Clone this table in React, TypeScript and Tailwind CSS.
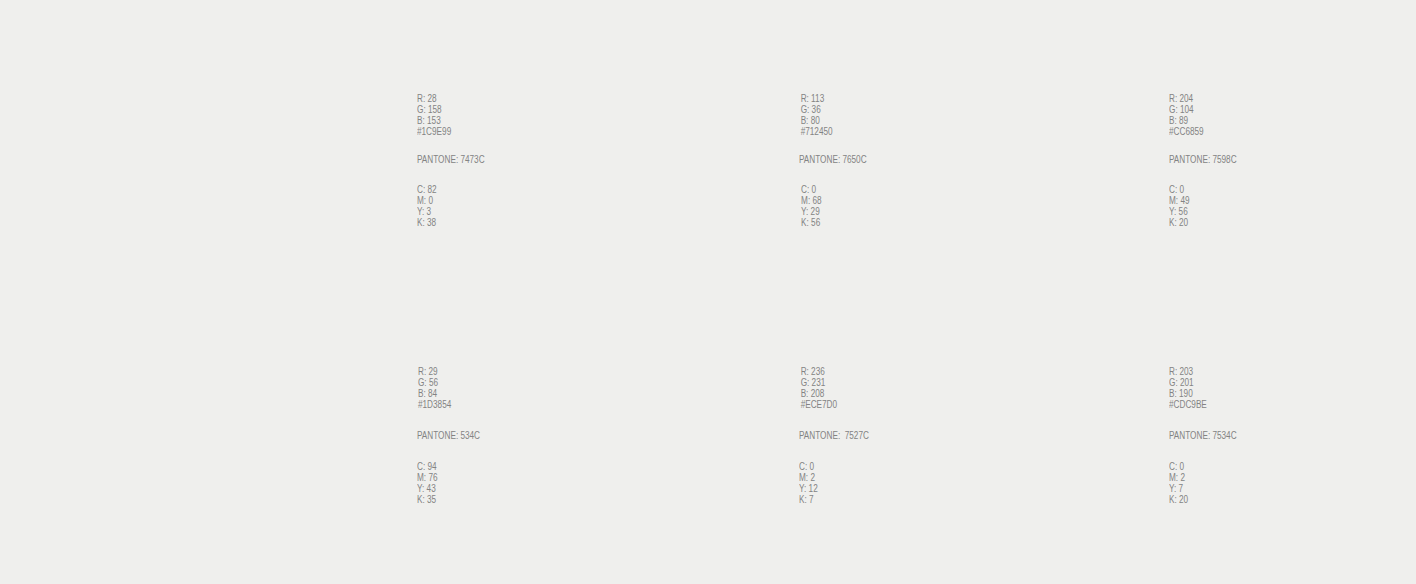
import React from "react";

type Block = {
  rgb: string[];
  pantone: string;
  cmyk: string[];
  rgbIndent: string;
  cmykIndent: string;
  gap1: string;
  gap2: string;
};

const Col = ({ b }: { b: Block }) => (
  <div className="flex flex-col origin-left scale-x-[0.82]">
    <div className={b.rgbIndent}>
      {b.rgb.map((t) => (
        <div key={t}>{t}</div>
      ))}
    </div>
    <div className={`${b.gap1} whitespace-pre`}>{b.pantone}</div>
    <div className={`${b.gap2} ${b.cmykIndent}`}>
      {b.cmyk.map((t) => (
        <div key={t}>{t}</div>
      ))}
    </div>
  </div>
);

const top: Block[] = [
  { rgb: ["R: 28", "G: 158", "B: 153", "#1C9E99"], pantone: "PANTONE: 7473C", cmyk: ["C: 82", "M: 0", "Y: 3", "K: 38"], rgbIndent: "", cmykIndent: "", gap1: "mt-[17px]", gap2: "mt-[19px]" },
  { rgb: ["R: 113", "G: 36", "B: 80", "#712450"], pantone: "PANTONE: 7650C", cmyk: ["C: 0", "M: 68", "Y: 29", "K: 56"], rgbIndent: "pl-[2px]", cmykIndent: "pl-[2.5px]", gap1: "mt-[17px]", gap2: "mt-[19px]" },
  { rgb: ["R: 204", "G: 104", "B: 89", "#CC6859"], pantone: "PANTONE: 7598C", cmyk: ["C: 0", "M: 49", "Y: 56", "K: 20"], rgbIndent: "", cmykIndent: "", gap1: "mt-[17px]", gap2: "mt-[19px]" },
];

const bottom: Block[] = [
  { rgb: ["R: 29", "G: 56", "B: 84", "#1D3854"], pantone: "PANTONE: 534C", cmyk: ["C: 94", "M: 76", "Y: 43", "K: 35"], rgbIndent: "pl-[1.2px]", cmykIndent: "", gap1: "mt-[20px]", gap2: "mt-[20px]" },
  { rgb: ["R: 236", "G: 231", "B: 208", "#ECE7D0"], pantone: "PANTONE:  7527C", cmyk: ["C: 0", "M: 2", "Y: 12", "K: 7"], rgbIndent: "pl-[2px]", cmykIndent: "", gap1: "mt-[20px]", gap2: "mt-[20px]" },
  { rgb: ["R: 203", "G: 201", "B: 190", "#CDC9BE"], pantone: "PANTONE: 7534C", cmyk: ["C: 0", "M: 2", "Y: 7", "K: 20"], rgbIndent: "", cmykIndent: "", gap1: "mt-[20px]", gap2: "mt-[20px]" },
];

export default function App() {
  return (
    <div
      className="w-[1416px] h-[584px] bg-[#efefed] text-[#838383] text-[10px] leading-[11px] overflow-hidden"
      style={{ fontFamily: '"Liberation Sans", Arial, sans-serif' }}
    >
      <div className="pt-[93px] pl-[417px]">
        <div className="grid grid-cols-[382px_369.5px_1fr]">
          {top.map((b) => (
            <Col key={b.pantone} b={b} />
          ))}
        </div>
        <div className="mt-[138px] grid grid-cols-[382px_369.5px_1fr]">
          {bottom.map((b) => (
            <Col key={b.pantone} b={b} />
          ))}
        </div>
      </div>
    </div>
  );
}
